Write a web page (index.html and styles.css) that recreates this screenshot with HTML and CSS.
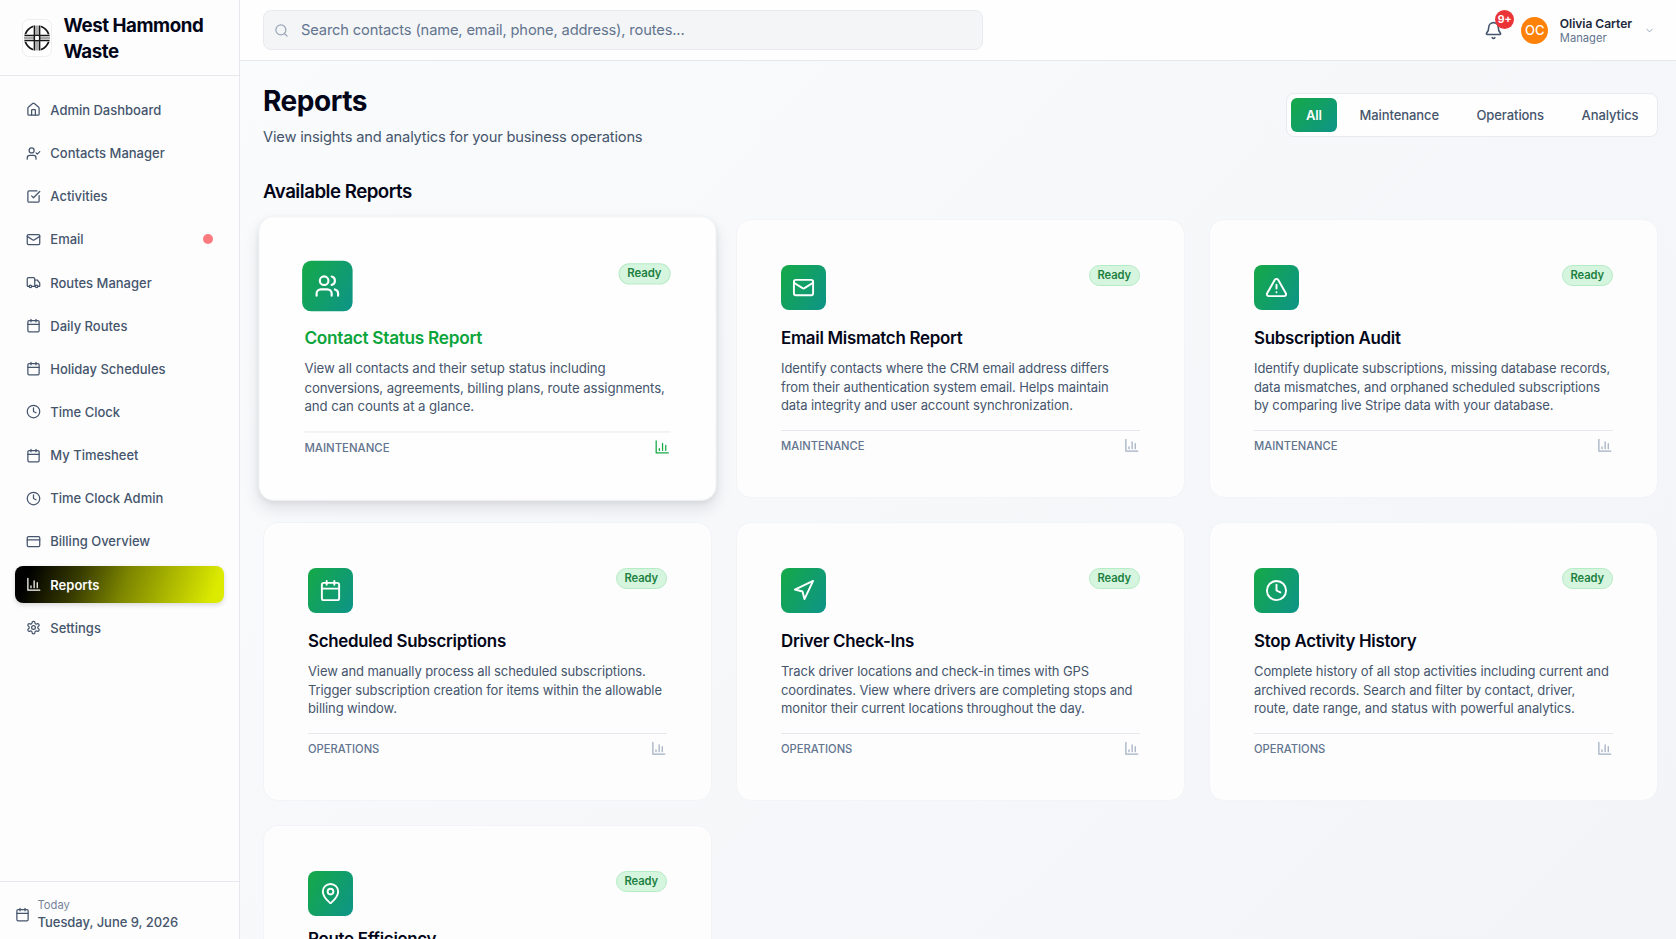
FILE: index.html
```html
<!DOCTYPE html>
<html lang="en">
<head>
  <meta charset="UTF-8" />
  <title>Reports - West Hammond Waste</title>
  <meta name="viewport" content="width=device-width, initial-scale=1.0" />
  <link rel="stylesheet" href="styles.css">
</head>
<body>
  <svg class="sprite" xmlns="http://www.w3.org/2000/svg">
    <symbol id="i-home" viewBox="0 0 24 24"><path d="M15 21v-8a1 1 0 0 0-1-1h-4a1 1 0 0 0-1 1v8"/><path d="M3 10a2 2 0 0 1 .7-1.5l7-6a2 2 0 0 1 2.6 0l7 6A2 2 0 0 1 21 10v9a2 2 0 0 1-2 2H5a2 2 0 0 1-2-2z"/></symbol>
    <symbol id="i-user-check" viewBox="0 0 24 24"><path d="M16 21v-2a4 4 0 0 0-4-4H6a4 4 0 0 0-4 4v2"/><circle cx="9" cy="7" r="4"/><path d="m16 11 2 2 4-4"/></symbol>
    <symbol id="i-check" viewBox="0 0 24 24"><path d="M21 10.5V19a2 2 0 0 1-2 2H5a2 2 0 0 1-2-2V5a2 2 0 0 1 2-2h12.5"/><path d="m9 11 3 3L22 4"/></symbol>
    <symbol id="i-mail" viewBox="0 0 24 24"><rect x="2" y="4" width="20" height="16" rx="2"/><path d="m22 7-9 5.7a2 2 0 0 1-2 0L2 7"/></symbol>
    <symbol id="i-truck" viewBox="0 0 24 24"><path d="M14 18V6a2 2 0 0 0-2-2H4a2 2 0 0 0-2 2v11a1 1 0 0 0 1 1h2"/><path d="M15 18H9"/><path d="M19 18h2a1 1 0 0 0 1-1v-3.65a1 1 0 0 0-.22-.62l-3.48-4.35A1 1 0 0 0 17.5 8H14"/><circle cx="17" cy="18" r="2"/><circle cx="7" cy="18" r="2"/></symbol>
    <symbol id="i-calendar" viewBox="0 0 24 24"><path d="M8 2v4M16 2v4"/><rect x="3" y="4" width="18" height="18" rx="2"/><path d="M3 10h18"/></symbol>
    <symbol id="i-clock" viewBox="0 0 24 24"><circle cx="12" cy="12" r="10"/><path d="M12 6v6l4 2"/></symbol>
    <symbol id="i-card" viewBox="0 0 24 24"><rect x="2" y="4" width="20" height="16" rx="2"/><path d="M2 9.5h20"/></symbol>
    <symbol id="i-chart" viewBox="0 0 24 24"><path d="M3 2v19h19"/><path d="M13 17V6M18 17V9M8 17v-3"/></symbol>
    <symbol id="i-settings" viewBox="0 0 24 24"><path d="M12.22 2h-.44a2 2 0 0 0-2 2v.18a2 2 0 0 1-1 1.73l-.43.25a2 2 0 0 1-2 0l-.15-.08a2 2 0 0 0-2.73.73l-.22.38a2 2 0 0 0 .73 2.73l.15.1a2 2 0 0 1 1 1.72v.51a2 2 0 0 1-1 1.74l-.15.09a2 2 0 0 0-.73 2.73l.22.38a2 2 0 0 0 2.73.73l.15-.08a2 2 0 0 1 2 0l.43.25a2 2 0 0 1 1 1.73V20a2 2 0 0 0 2 2h.44a2 2 0 0 0 2-2v-.18a2 2 0 0 1 1-1.73l.43-.25a2 2 0 0 1 2 0l.15.08a2 2 0 0 0 2.73-.73l.22-.39a2 2 0 0 0-.73-2.73l-.15-.08a2 2 0 0 1-1-1.74v-.5a2 2 0 0 1 1-1.74l.15-.09a2 2 0 0 0 .73-2.73l-.22-.38a2 2 0 0 0-2.73-.73l-.15.08a2 2 0 0 1-2 0l-.43-.25a2 2 0 0 1-1-1.73V4a2 2 0 0 0-2-2z"/><circle cx="12" cy="12" r="3"/></symbol>
    <symbol id="i-search" viewBox="0 0 24 24"><circle cx="11" cy="11" r="8"/><path d="m21 21-4.3-4.3"/></symbol>
    <symbol id="i-bell" viewBox="0 0 24 24"><path d="M10.3 21a1.94 1.94 0 0 0 3.4 0"/><path d="M6 8a6 6 0 0 1 12 0c0 4.5 1.4 6 2.7 7.3A1 1 0 0 1 20 17H4a1 1 0 0 1-.7-1.7C4.6 14 6 12.5 6 8"/></symbol>
    <symbol id="i-down" viewBox="0 0 24 24"><path d="m6 9 6 6 6-6"/></symbol>
    <symbol id="i-users" viewBox="0 0 24 24"><path d="M16 21v-2a4 4 0 0 0-4-4H6a4 4 0 0 0-4 4v2"/><circle cx="9" cy="7" r="4"/><path d="M22 21v-2a4 4 0 0 0-3-3.87"/><path d="M16 3.13a4 4 0 0 1 0 7.75"/></symbol>
    <symbol id="i-alert" viewBox="0 0 24 24"><path d="m21.73 18-8-14a2 2 0 0 0-3.48 0l-8 14A2 2 0 0 0 4 21h16a2 2 0 0 0 1.73-3"/><path d="M12 9v4M12 17h.01"/></symbol>
    <symbol id="i-nav" viewBox="0 0 24 24"><path d="m3 11 19-9-9 19-2-8z"/></symbol>
    <symbol id="i-pin" viewBox="0 0 24 24"><path d="M20 10c0 5-5.5 10.2-7.4 11.8a1 1 0 0 1-1.2 0C9.5 20.2 4 15 4 10a8 8 0 0 1 16 0"/><circle cx="12" cy="10" r="3"/></symbol>
  </svg>

  <div class="app">
    <aside class="sidebar">
      <div class="brand">
        <div class="brand-logo">
          <svg viewBox="0 0 28 28">
            <circle cx="14" cy="14" r="12.2"/>
            <path class="gap" d="M14 1v26M1 14h26"/>
            <path class="mid" d="M14 1.5v25M1 14h26"/>
            <path d="M11.5 1.6v24.8M16.5 1.6v24.8M1.4 11.5h25.2M1.4 16.5h25.2"/>
            <rect class="hub" x="11.5" y="11.5" width="5" height="5" rx="1"/>
          </svg>
        </div>
        <div class="brand-name">West Hammond Waste</div>
      </div>

      <nav class="nav">
        <a class="nav-item"><svg class="icon"><use href="#i-home"/></svg>Admin Dashboard</a>
        <a class="nav-item"><svg class="icon"><use href="#i-user-check"/></svg>Contacts Manager</a>
        <a class="nav-item"><svg class="icon"><use href="#i-check"/></svg>Activities</a>
        <a class="nav-item"><svg class="icon"><use href="#i-mail"/></svg>Email<span class="dot"></span></a>
        <a class="nav-item"><svg class="icon"><use href="#i-truck"/></svg>Routes Manager</a>
        <a class="nav-item"><svg class="icon"><use href="#i-calendar"/></svg>Daily Routes</a>
        <a class="nav-item"><svg class="icon"><use href="#i-calendar"/></svg>Holiday Schedules</a>
        <a class="nav-item"><svg class="icon"><use href="#i-clock"/></svg>Time Clock</a>
        <a class="nav-item"><svg class="icon"><use href="#i-calendar"/></svg>My Timesheet</a>
        <a class="nav-item"><svg class="icon"><use href="#i-clock"/></svg>Time Clock Admin</a>
        <a class="nav-item"><svg class="icon"><use href="#i-card"/></svg>Billing Overview</a>
        <a class="nav-item active"><svg class="icon"><use href="#i-chart"/></svg>Reports</a>
        <a class="nav-item"><svg class="icon"><use href="#i-settings"/></svg>Settings</a>
      </nav>

      <div class="today">
        <svg class="icon"><use href="#i-calendar"/></svg>
        <div>
          <div class="today-label">Today</div>
          <div class="today-date">Tuesday, June 9, 2026</div>
        </div>
      </div>
    </aside>

    <div class="main">
      <header class="topbar">
        <div class="search">
          <svg class="icon"><use href="#i-search"/></svg>
          <span>Search contacts (name, email, phone, address), routes...</span>
        </div>
        <div class="account">
          <div class="bell">
            <svg class="icon"><use href="#i-bell"/></svg>
            <span class="bell-count">9+</span>
          </div>
          <div class="avatar">OC</div>
          <div class="who">
            <div class="who-name">Olivia Carter</div>
            <div class="who-role">Manager</div>
          </div>
          <svg class="icon chevron"><use href="#i-down"/></svg>
        </div>
      </header>

      <main class="content">
        <div class="page-head">
          <div>
            <h1>Reports</h1>
            <p class="subtitle">View insights and analytics for your business operations</p>
          </div>
          <div class="tabs">
            <button class="tab active">All</button>
            <button class="tab">Maintenance</button>
            <button class="tab">Operations</button>
            <button class="tab">Analytics</button>
          </div>
        </div>

        <h2>Available Reports</h2>

        <div class="grid">
          <div class="card hovered">
            <div class="card-top">
              <div class="card-icon"><svg class="icon"><use href="#i-users"/></svg></div>
              <span class="badge">Ready</span>
            </div>
            <h3>Contact Status Report</h3>
            <p>View all contacts and their setup status including<br>conversions, agreements, billing plans, route assignments,<br>and can counts at a glance.</p>
            <div class="card-foot"><span>MAINTENANCE</span><svg class="icon"><use href="#i-chart"/></svg></div>
          </div>

          <div class="card">
            <div class="card-top">
              <div class="card-icon"><svg class="icon"><use href="#i-mail"/></svg></div>
              <span class="badge">Ready</span>
            </div>
            <h3>Email Mismatch Report</h3>
            <p>Identify contacts where the CRM email address differs<br>from their authentication system email. Helps maintain<br>data integrity and user account synchronization.</p>
            <div class="card-foot"><span>MAINTENANCE</span><svg class="icon"><use href="#i-chart"/></svg></div>
          </div>

          <div class="card">
            <div class="card-top">
              <div class="card-icon"><svg class="icon"><use href="#i-alert"/></svg></div>
              <span class="badge">Ready</span>
            </div>
            <h3>Subscription Audit</h3>
            <p>Identify duplicate subscriptions, missing database records,<br>data mismatches, and orphaned scheduled subscriptions<br>by comparing live Stripe data with your database.</p>
            <div class="card-foot"><span>MAINTENANCE</span><svg class="icon"><use href="#i-chart"/></svg></div>
          </div>

          <div class="card">
            <div class="card-top">
              <div class="card-icon"><svg class="icon"><use href="#i-calendar"/></svg></div>
              <span class="badge">Ready</span>
            </div>
            <h3>Scheduled Subscriptions</h3>
            <p>View and manually process all scheduled subscriptions.<br>Trigger subscription creation for items within the allowable<br>billing window.</p>
            <div class="card-foot"><span>OPERATIONS</span><svg class="icon"><use href="#i-chart"/></svg></div>
          </div>

          <div class="card">
            <div class="card-top">
              <div class="card-icon"><svg class="icon"><use href="#i-nav"/></svg></div>
              <span class="badge">Ready</span>
            </div>
            <h3>Driver Check-Ins</h3>
            <p>Track driver locations and check-in times with GPS<br>coordinates. View where drivers are completing stops and<br>monitor their current locations throughout the day.</p>
            <div class="card-foot"><span>OPERATIONS</span><svg class="icon"><use href="#i-chart"/></svg></div>
          </div>

          <div class="card">
            <div class="card-top">
              <div class="card-icon"><svg class="icon"><use href="#i-clock"/></svg></div>
              <span class="badge">Ready</span>
            </div>
            <h3>Stop Activity History</h3>
            <p>Complete history of all stop activities including current and<br>archived records. Search and filter by contact, driver,<br>route, date range, and status with powerful analytics.</p>
            <div class="card-foot"><span>OPERATIONS</span><svg class="icon"><use href="#i-chart"/></svg></div>
          </div>

          <div class="card compact">
            <div class="card-top">
              <div class="card-icon"><svg class="icon"><use href="#i-pin"/></svg></div>
              <span class="badge">Ready</span>
            </div>
            <h3>Route Efficiency</h3>
          </div>
        </div>
      </main>
    </div>
  </div>
</body>
</html>
```

FILE: styles.css
```css
* {
  box-sizing: border-box;
}

html, body {
  margin: 0;
  padding: 0;
  height: 100%;
  overflow: hidden;
  font-family: Inter, "Liberation Sans", sans-serif;
  color: #020618;
}

h1, h2, h3, p {
  margin: 0;
}

.sprite {
  display: none;
}

.icon {
  width: 15px;
  height: 15px;
  flex-shrink: 0;
  fill: none;
  stroke: currentColor;
  stroke-width: 2;
  stroke-linecap: round;
  stroke-linejoin: round;
}

.app {
  display: flex;
  height: 100vh;
}

/* sidebar */
.sidebar {
  display: flex;
  flex-direction: column;
  width: 240px;
  flex-shrink: 0;
  background: #fdfdfe;
  border-right: 1px solid #e6e8ee;
}

.brand {
  display: flex;
  align-items: center;
  gap: 11.5px;
  height: 76px;
  padding: 0 22px;
  border-bottom: 1px solid #e6e8ee;
}

.brand-logo {
  display: flex;
  align-items: center;
  justify-content: center;
  width: 30px;
  height: 38px;
  flex-shrink: 0;
  border: 1px solid #eeeff2;
  border-radius: 7px;
  background: #fff;
}

.brand-logo svg {
  width: 28px;
  height: 28px;
  flex-shrink: 0;
  fill: none;
  stroke: #161616;
  stroke-width: 1.7;
}

.brand-logo .gap {
  stroke: #fff;
  stroke-width: 7.5;
}

.brand-logo .mid {
  stroke: #8a8a8a;
  stroke-width: 1.4;
}

.brand-logo .hub {
  fill: #fff;
  stroke-width: 1.2;
}

.brand-name {
  padding-top: 3px;
  font-size: 18.7px;
  font-weight: 700;
  line-height: 26.3px;
  letter-spacing: -0.45px;
}

.nav {
  display: flex;
  flex-direction: column;
  gap: 5.75px;
  flex: 1;
  padding: 15.3px 15px;
}

.nav-item {
  display: flex;
  align-items: center;
  gap: 9.3px;
  height: 37.4px;
  padding: 0 11px;
  border-radius: 8px;
  font-size: 13px;
  font-weight: 500;
  letter-spacing: -0.01px;
  color: #45556c;
}

.nav-item.active {
  background: linear-gradient(110deg, #000 7%, #363a00 30%, #7c8500 52%, #dcea00 94%);
  color: #fff;
  font-weight: 600;
  box-shadow: 0 2px 5px rgba(0, 0, 0, 0.15);
}

.dot {
  width: 10px;
  height: 10px;
  margin-left: auto;
  border-radius: 50%;
  background: #fb7a7d;
}

.today {
  display: flex;
  align-items: center;
  gap: 7.5px;
  height: 58px;
  padding: 7px 15px 0;
  border-top: 1px solid #e6e8ee;
  color: #45556c;
}

.today-label {
  font-size: 11.2px;
  line-height: 15px;
  color: #76849b;
}

.today-date {
  font-size: 13px;
  font-weight: 500;
  line-height: 18px;
  letter-spacing: -0.03px;
}

/* top bar */
.main {
  display: flex;
  flex-direction: column;
  flex: 1;
  min-width: 0;
  background: linear-gradient(135deg, #fafbfc, #f2f4f7);
}

.topbar {
  display: flex;
  align-items: center;
  justify-content: space-between;
  height: 61px;
  flex-shrink: 0;
  padding: 0 21px 0 23px;
  background: #fefefe;
  border-bottom: 1px solid #e6e8ee;
}

.search {
  display: flex;
  align-items: center;
  gap: 12px;
  width: 720px;
  height: 40px;
  padding: 0 10px;
  border: 1px solid #e8eaef;
  border-radius: 8px;
  background: #f4f5f7;
  font-size: 14.7px;
  letter-spacing: -0.15px;
  color: #62748e;
}

.search .icon {
  color: #9aa6b8;
}

.account {
  display: flex;
  align-items: center;
}

.bell {
  position: relative;
  display: flex;
  margin-right: 18px;
  color: #45556c;
}

.bell .icon {
  width: 19px;
  height: 19px;
}

.bell-count {
  position: absolute;
  top: -11px;
  left: 11px;
  width: 19px;
  height: 19px;
  border-radius: 50%;
  background: #eb3438;
  color: #fff;
  font-size: 10.5px;
  font-weight: 700;
  line-height: 19px;
  text-align: center;
}

.avatar {
  width: 27px;
  height: 27px;
  margin-right: 11.5px;
  border-radius: 50%;
  background: #fe8109;
  color: #fff;
  font-size: 13px;
  font-weight: 500;
  line-height: 27px;
  text-align: center;
}

.who {
  padding-top: 1px;
}

.who-name {
  font-size: 12.1px;
  font-weight: 600;
  line-height: 15px;
  letter-spacing: -0.05px;
  color: #1d293d;
}

.who-role {
  font-size: 11.2px;
  line-height: 15px;
  color: #62748e;
}

.chevron {
  width: 11px;
  height: 11px;
  margin-left: 12px;
  color: #90a1b9;
}

/* page */
.content {
  flex: 1;
  min-height: 0;
  overflow: hidden;
  padding: 22px 18px 0 23px;
}

.page-head {
  display: flex;
  align-items: center;
  justify-content: space-between;
}

h1 {
  font-size: 28px;
  font-weight: 700;
  line-height: 36px;
  letter-spacing: -0.45px;
}

.subtitle {
  margin-top: 6px;
  font-size: 14.7px;
  line-height: 24px;
  letter-spacing: -0.19px;
  color: #45556c;
}

.tabs {
  display: flex;
  gap: 7.5px;
  margin-bottom: 2px;
  padding: 4px 3.5px;
  border: 1px solid #e8eaef;
  border-radius: 8px;
  background: #fefefe;
}

.tab {
  height: 34px;
  padding: 0 15px;
  border: 0;
  border-radius: 6px;
  background: none;
  font-family: inherit;
  font-size: 13px;
  font-weight: 500;
  letter-spacing: -0.08px;
  color: #45556c;
}

.tab.active {
  background: linear-gradient(135deg, #16a947, #0d9488);
  color: #fff;
  font-weight: 600;
}

h2 {
  margin: 28.5px 0 13.5px;
  font-size: 18.7px;
  font-weight: 600;
  line-height: 28px;
  letter-spacing: -0.5px;
}

.grid {
  display: grid;
  grid-template-columns: repeat(3, minmax(0, 1fr));
  gap: 24px;
}

.card {
  height: 279px;
  padding: 45px 44px 44px;
  border: 1px solid #f3f4f7;
  border-radius: 15px;
  background: #fdfdfe;
}

.card.hovered {
  transform: scale(1.02);
  background: #fefefe;
  box-shadow: 0 8px 16px rgba(15, 23, 42, 0.1), 0 2px 5px rgba(15, 23, 42, 0.06);
}

.card-top {
  display: flex;
  align-items: flex-start;
  justify-content: space-between;
}

.card-icon {
  display: flex;
  align-items: center;
  justify-content: center;
  width: 45px;
  height: 45px;
  border-radius: 8px;
  background: linear-gradient(120deg, #16a947, #0d9488);
  color: #fff;
}

.card-icon .icon {
  width: 23px;
  height: 23px;
}

.hovered .card-icon {
  transform: scale(1.1);
}

.badge {
  height: 21px;
  padding: 0 8px;
  border: 1px solid #b5ebc5;
  border-radius: 11px;
  background: #d5f5de;
  font-size: 11.2px;
  font-weight: 600;
  line-height: 19px;
  letter-spacing: -0.1px;
  color: #1c8040;
}

.card h3 {
  margin-top: 15px;
  font-size: 16.9px;
  font-weight: 600;
  line-height: 26px;
  letter-spacing: -0.28px;
}

.card.compact h3 {
  margin-top: 10px;
}

.hovered h3 {
  color: #0ba53c;
}

.card p {
  margin-top: 8px;
  font-size: 13px;
  line-height: 18.7px;
  letter-spacing: -0.1px;
  white-space: nowrap;
  color: #45556c;
}

.card-foot {
  display: flex;
  align-items: center;
  justify-content: space-between;
  margin-top: 14.5px;
  padding-top: 7.5px;
  border-top: 1px solid #e6e8ee;
  font-size: 11.2px;
  font-weight: 500;
  color: #62748e;
}

.card-foot .icon {
  margin-right: 1px;
  color: #a3afc1;
}

.hovered .card-foot .icon {
  color: #16a947;
}
```
